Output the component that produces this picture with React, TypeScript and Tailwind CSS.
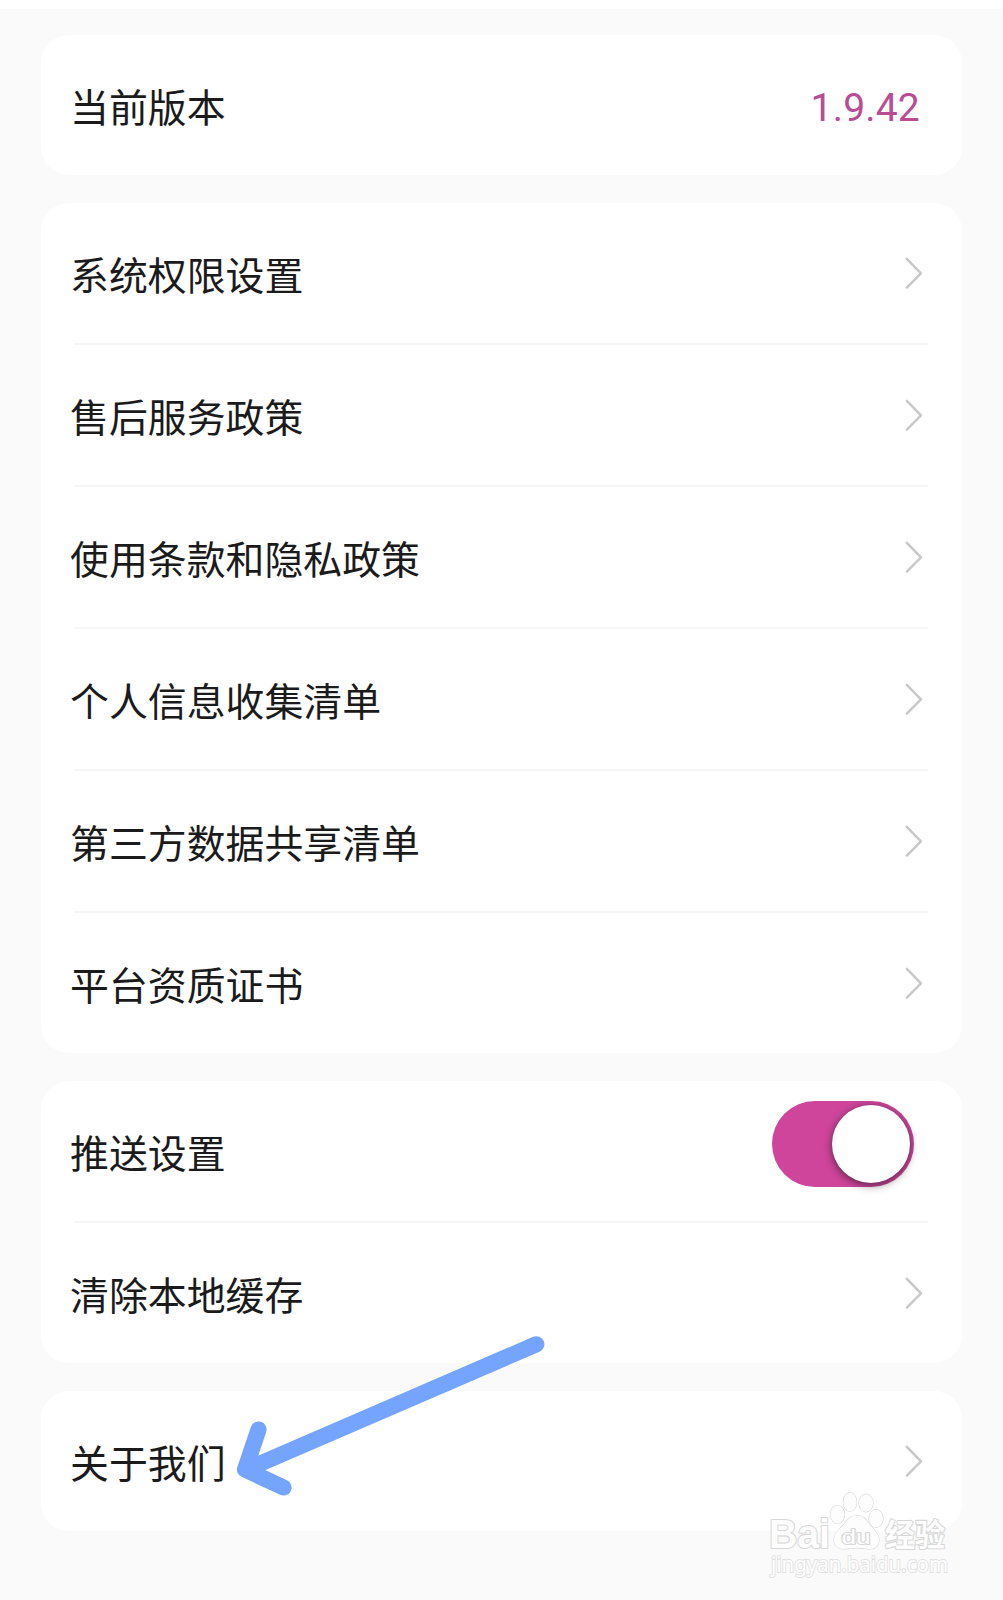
import type { ReactNode } from 'react';

function Chevron() {
  return (
    <svg width="20" height="34" viewBox="0 0 20 34" fill="none" stroke="#c8c8c8" strokeWidth="2.4" strokeLinecap="round" strokeLinejoin="round">
      <path d="M2.8 2.8 17 17.4 2.8 31.6" />
    </svg>
  );
}

function Row({ label, last = false, children }: { label: string; last?: boolean; children?: ReactNode }) {
  return (
    <div className="pl-[29px] pr-[38px]">
      <div className="flex h-[140px] items-center justify-between">
        <span className="text-[38.9px] leading-[56px] whitespace-nowrap text-[#1b1b1b]">{label}</span>
        {children ?? <Chevron />}
      </div>
      {!last && <div className="-mr-[4px] ml-1 h-[2px] bg-[#f6f6f6]" />}
    </div>
  );
}

function Card({ children }: { children: ReactNode }) {
  return <section className="rounded-[28px] bg-white">{children}</section>;
}

function Toggle() {
  return (
    <div className="mr-[10px] mb-[15px] flex h-[86px] w-[142px] items-center justify-end rounded-full bg-[#ce459b] pr-[4px]">
      <div className="h-[78px] w-[78px] rounded-full bg-white shadow-[0_4px_10px_rgba(0,0,0,0.25),0_1px_6px_rgba(40,40,40,0.5)]" />
    </div>
  );
}

function Arrow() {
  return (
    <svg className="absolute top-[1330px] left-[230px]" width="325" height="175" viewBox="230 1330 325 175" fill="none" stroke="#74a4fe" strokeWidth="16.2" strokeLinecap="round" strokeLinejoin="round">
      <path d="M536.3 1344.3 250 1468" />
      <path d="M258.500 1429.500 245 1469.500 283.500 1487.500" />
    </svg>
  );
}

function Watermark() {
  return (
    <svg className="absolute top-[1485px] left-[762px]" width="200" height="100" viewBox="762 1485 200 100" fill="#fdfdfd" stroke="#d8d8d8" strokeWidth="1.2" paintOrder="stroke">
      <ellipse cx="837.5" cy="1514.5" rx="7" ry="9" />
      <ellipse cx="850" cy="1502" rx="6.7" ry="9.4" />
      <ellipse cx="866" cy="1503" rx="7" ry="8.8" />
      <ellipse cx="876" cy="1518.5" rx="7" ry="8.8" />
      <path d="M857 1515.5c-7 0-10 5-14 10-4 4.500-9 8-9 14.500 0 5 3.500 9 9 9 5 0 8-1.200 14-1.200s9 1.200 13.500 1.200c5 0 8.500-4 8.500-9.200 0-6.300-5-9.800-8.500-14.300-4-5-6.500-10-13.500-10z" />
      <g strokeWidth="2.2" strokeLinejoin="round" fontWeight="700">
        <text x="769" y="1548" fontSize="41" fontFamily="'Liberation Sans'" textLength="61" lengthAdjust="spacingAndGlyphs">Bai</text>
        <text x="841.500" y="1544" fontSize="20" fontFamily="'Liberation Sans'" textLength="29" lengthAdjust="spacingAndGlyphs" fontWeight="400">du</text>
        <text x="885" y="1546" fontSize="31" fontFamily="'Noto Sans CJK SC'" textLength="60" lengthAdjust="spacingAndGlyphs">经验</text>
      </g>
      <text x="771" y="1572" fontSize="21.500" strokeWidth="1.800" stroke="#e1e1e1" fontFamily="'Noto Sans'" textLength="177" lengthAdjust="spacingAndGlyphs">jingyan.baidu.com</text>
    </svg>
  );
}

const policies = ['系统权限设置', '售后服务政策', '使用条款和隐私政策', '个人信息收集清单', '第三方数据共享清单', '平台资质证书'];

export default function App() {
  return (
    <main className="relative h-[1600px] w-[1003px] overflow-hidden border-t-[9px] border-white bg-[#fafafa] font-['Noto_Sans_CJK_SC',sans-serif]">
      <div className="flex flex-col gap-[28px] pt-[26px] pr-[41px] pl-[41px]">
        <Card>
          <Row label="当前版本" last>
            <span className="mr-[4px] pt-[6px] font-[Roboto,sans-serif] text-[39px] tracking-[0.2px] text-[#b84c95]">1.9.42</span>
          </Row>
        </Card>
        <Card>
          {policies.map((label, i) => (
            <Row key={label} label={label} last={i === policies.length - 1} />
          ))}
        </Card>
        <Card>
          <Row label="推送设置">
            <Toggle />
          </Row>
          <Row label="清除本地缓存" last />
        </Card>
        <Card>
          <Row label="关于我们" last />
        </Card>
      </div>
      <div className="pointer-events-none absolute -top-[9px] left-0 h-[1600px] w-[1003px]">
        <Arrow />
        <Watermark />
      </div>
    </main>
  );
}
